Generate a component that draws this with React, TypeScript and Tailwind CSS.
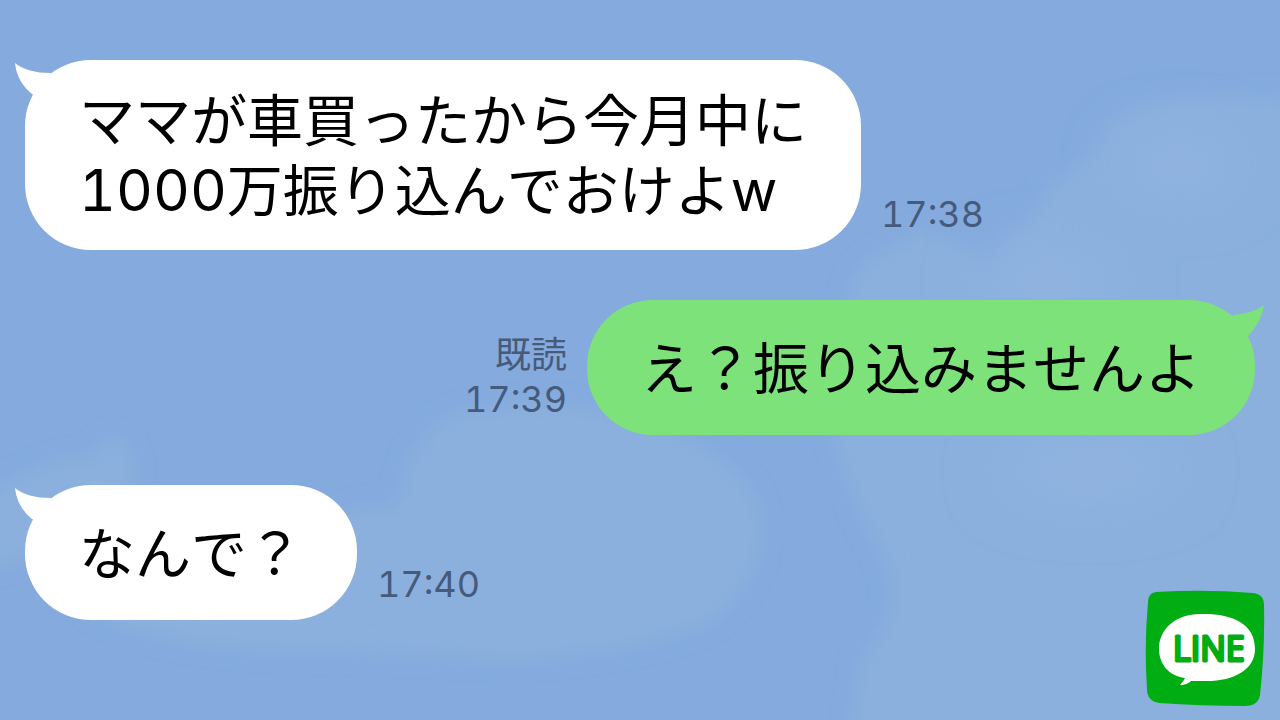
import React from 'react';
import clsx from 'clsx';

interface Message {
  id: number;
  mine: boolean;
  lines: string[];
  time: string;
  read?: boolean;
}

const messages: Message[] = [
  {
    id: 1,
    mine: false,
    lines: ['ママが車買ったから今月中に', '1000万振り込んでおけよw'],
    time: '17:38',
  },
  {
    id: 2,
    mine: true,
    lines: ['え？振り込みませんよ'],
    time: '17:39',
    read: true,
  },
  { id: 3, mine: false, lines: ['なんで？'], time: '17:40' },
];

// Soft clouds behind the conversation
const Sky: React.FC = () => (
  <svg
    className="absolute inset-0 h-full w-full"
    viewBox="0 0 1280 720"
    preserveAspectRatio="none"
    aria-hidden="true"
  >
    <defs>
      <filter id="soft" x="-10%" y="-10%" width="120%" height="120%">
        <feGaussianBlur stdDeviation="10" />
      </filter>
      <filter id="haze" x="-50%" y="-50%" width="200%" height="200%">
        <feGaussianBlur stdDeviation="28" />
      </filter>
    </defs>
    <g fill="#8bb0dd" filter="url(#soft)">
      <path d="M1300 95 L1190 98 Q1120 105 1102 135 Q1100 160 1072 165 Q1062 182 1045 190 Q1040 225 1010 232 L994 268 Q970 250 945 236 Q915 225 900 245 Q860 255 850 290 L835 440 Q850 500 880 550 Q910 610 860 660 L850 740 L1300 740 Z" />
      <path d="M345 515 Q355 500 372 510 Q395 512 402 492 Q405 455 428 435 Q440 412 480 410 Q560 395 640 420 Q740 450 760 510 Q770 570 715 620 Q640 655 520 660 L250 650 Q120 640 80 600 Z" />
      <path d="M-20 500 Q10 480 38 468 Q65 455 92 460 Q105 432 120 438 Q138 455 132 485 L60 550 L-20 570 Z" />
    </g>
    <g fill="#91b3e0" filter="url(#haze)">
      <ellipse cx="1180" cy="165" rx="60" ry="30" />
      <ellipse cx="1050" cy="280" rx="70" ry="30" />
      <ellipse cx="1090" cy="470" rx="90" ry="30" />
    </g>
  </svg>
);

const Tail: React.FC<{ mine: boolean }> = ({ mine }) =>
  mine ? (
    <svg
      className="absolute top-0 -right-[10px] h-10 w-10 fill-[#7de27a]"
      viewBox="0 0 40 40"
      aria-hidden="true"
    >
      <path d="M39 5 Q29 13 8 15 L4 24 L14 38 L23 36 Q36 23 39 5 Z" />
    </svg>
  ) : (
    <svg
      className="absolute top-0 -left-[10px] h-10 w-10 fill-white"
      viewBox="0 0 40 40"
      aria-hidden="true"
    >
      <path d="M0 3 Q12 13 36 13 L28 38 L17 34 Q2 22 0 3 Z" />
    </svg>
  );

// Latin letters and digits are set a little larger than the kana around them
const Line: React.FC<{ text: string }> = ({ text }) => (
  <span className="block">
    {text.split(/([0-9a-z]+)/).map((part, i) =>
      /^[0-9a-z]+$/.test(part) ? (
        <span
          key={i}
          className="font-['Inter','Noto_Sans_CJK_JP',sans-serif] text-[57px] leading-none tabular-nums"
        >
          {part}
        </span>
      ) : (
        part
      )
    )}
  </span>
);

const Bubble: React.FC<{ message: Message }> = ({ message }) => (
  <li
    className={clsx(
      'flex items-end gap-5',
      message.mine && 'flex-row-reverse'
    )}
  >
    <div
      className={clsx(
        'relative flex min-h-[135px] items-center rounded-[66px] px-[54px] pt-[22px] pb-[28px]',
        message.mine ? 'bg-[#7de27a]' : 'bg-white'
      )}
    >
      <Tail mine={message.mine} />
      <p className="relative text-[56px] leading-[70px] text-black [font-kerning:none]">
        {message.lines.map((line) => (
          <Line key={line} text={line} />
        ))}
      </p>
    </div>
    <div
      className={clsx(
        'flex flex-col pb-[14px] text-[#465a7b]',
        message.mine && 'items-end'
      )}
    >
      {message.read && (
        <span className="text-[36px] leading-[50px]">既読</span>
      )}
      <time className="font-['Inter',sans-serif] text-[36px] leading-[44px] tabular-nums">
        {message.time}
      </time>
    </div>
  </li>
);

const Logo: React.FC = () => (
  <svg
    className="absolute right-[15px] bottom-[13px] h-[117px] w-[120px]"
    viewBox="0 0 120 117"
    role="img"
    aria-label="LINE"
  >
    <path
      d="M11 2 Q60 -1 108 3 Q119 4 119 15 Q120 60 115 105 Q113 116 100 116 Q55 116 14 113 Q2 111 2 99 Q-1 55 3 12 Q3 3 11 2 Z"
      fill="#00ae13"
    />
    <path
      d="M55 24 C86 23 110 33 110 59 C110 80 88 92 58 91 L46 91 Q42 95 35 95 Q39 91 40 88 C24 86 14 74 14 59 C14 38 32 24 55 24 Z"
      fill="#fff"
    />
    <text
      x="28"
      y="71"
      fill="#00ae13"
      stroke="#00ae13"
      strokeWidth="3"
      strokeLinejoin="round"
      className="font-['Open_Sans',sans-serif] text-[34px] font-normal"
    >
      LINE
    </text>
  </svg>
);

const App: React.FC = () => (
  <main
    lang="ja"
    className="relative min-h-screen overflow-hidden bg-[#84aade] font-['Noto_Sans_CJK_JP',sans-serif]"
  >
    <Sky />
    <ul className="relative flex flex-col gap-[50px] px-[25px] pt-[60px] pb-[100px]">
      {messages.map((message) => (
        <Bubble key={message.id} message={message} />
      ))}
    </ul>
    <Logo />
  </main>
);

export default App;
